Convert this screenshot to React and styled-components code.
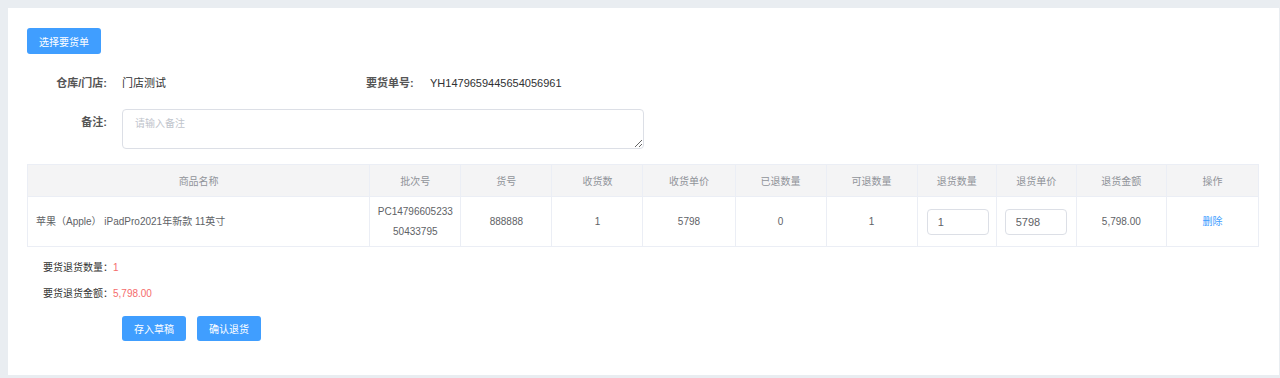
import React from 'react'
import styled, { createGlobalStyle } from 'styled-components'

const GlobalStyle = createGlobalStyle`
  html, body {
    margin: 0;
    padding: 0;
    background: #e9edf1;
  }
  body {
    padding: 8px 1px 3px 8px;
    font-family: "Liberation Sans", "Noto Sans CJK SC", sans-serif;
    color: #606266;
  }
`;

const Panel = styled.div`
  background: #fff;
  padding: 20px 19px 0 19px;
  height: 367px;
  box-sizing: border-box;
`;

const Button = styled.button`
  -webkit-appearance: none;
  display: block;
  border: 0;
  border-radius: 3px;
  background: #409eff;
  color: #fff;
  font-family: inherit;
  font-size: 10px;
  height: ${p => p.$h || 25}px;
  padding: 0 12px;
  cursor: pointer;
`;

const FormRow = styled.div`
  display: grid;
  grid-template-columns: ${p => p.$cols};
  align-items: ${p => (p.$top ? 'start' : 'center')};
  margin-top: ${p => p.$mt || 0}px;
`;

const Label = styled.div`
  text-align: ${p => (p.$left ? 'left' : 'right')};
  padding-right: ${p => (p.$left ? 0 : 15)}px;
  font-size: 11px;
  color: #555;
  font-weight: bold;
  height: 20px;
  line-height: 20px;
  white-space: nowrap;
  margin-top: ${p => (p.$top ? 3 : 0)}px;
`;

const Value = styled.div`
  font-size: 11px;
  color: #303133;
  height: 20px;
  line-height: 20px;
  white-space: nowrap;
`;

const Remark = styled.textarea`
  display: block;
  width: 522px;
  height: 40px;
  box-sizing: border-box;
  border: 1px solid #dcdfe6;
  border-radius: 4px;
  padding: 5px 12px;
  font-family: inherit;
  font-size: 10px;
  color: #606266;
  resize: vertical;
  &::placeholder {
    color: #c0c4cc;
  }
`;

const Table = styled.table`
  margin-top: 15px;
  border-collapse: collapse;
  width: 1232px;
  table-layout: fixed;
  font-size: 10px;
`;

const Th = styled.th`
  background: #f4f4f5;
  color: #909399;
  font-weight: normal;
  height: 31px;
  border: 1px solid #ebeef5;
  text-align: center;
  padding: 0;
`;

const Td = styled.td`
  height: 49px;
  border: 1px solid #ebeef5;
  text-align: ${p => (p.$left ? 'left' : 'center')};
  padding: 0 ${p => (p.$left ? 8 : 0)}px;
  color: #606266;
  line-height: 20px;
`;

const CellInput = styled.input`
  width: 62px;
  height: 26px;
  box-sizing: border-box;
  border: 1px solid #dcdfe6;
  border-radius: 4px;
  padding: 0 10px;
  font-family: inherit;
  font-size: 11px;
  color: #606266;
  margin-left: ${p => p.$ml || 0}px;
  display: block;
`;

const Link = styled.a`
  color: #409eff;
  cursor: pointer;
`;

const Summary = styled.div`
  font-size: 10px;
  color: #333;
  padding-left: 16px;
  margin-top: ${p => p.$mt}px;
  height: 16px;
  line-height: 16px;
`;

const Red = styled.span`
  color: #f56c6c;
`;

const Actions = styled.div`
  display: flex;
  gap: 11px;
  margin-top: 14px;
  padding-left: 95px;
`;

const columns = [
  ['商品名称', 342],
  ['批次号', 91],
  ['货号', 91],
  ['收货数', 91],
  ['收货单价', 92],
  ['已退数量', 91],
  ['可退数量', 91],
  ['退货数量', 79],
  ['退货单价', 80],
  ['退货金额', 90],
  ['操作', 92],
];

export default function App() {
  return (
    <>
      <GlobalStyle />
      <Panel>
        <Button $h={26}>选择要货单</Button>
        <FormRow $cols="95px 244px 64px auto" $mt={19}>
          <Label>仓库/门店:</Label>
          <Value>门店测试</Value>
          <Label $left>要货单号:</Label>
          <Value>YH1479659445654056961</Value>
        </FormRow>
        <FormRow $cols="95px auto" $top $mt={16}>
          <Label $top>备注:</Label>
          <Remark placeholder="请输入备注" />
        </FormRow>
        <Table>
          <colgroup>
            {columns.map(([name, w]) => (
              <col key={name} style={{ width: w }} />
            ))}
          </colgroup>
          <thead>
            <tr>
              {columns.map(([name]) => (
                <Th key={name}>{name}</Th>
              ))}
            </tr>
          </thead>
          <tbody>
            <tr>
              <Td $left>苹果（Apple） iPadPro2021年新款 11英寸</Td>
              <Td>PC14796605233<br />50433795</Td>
              <Td>888888</Td>
              <Td>1</Td>
              <Td>5798</Td>
              <Td>0</Td>
              <Td>1</Td>
              <Td><CellInput $ml={9} defaultValue="1" /></Td>
              <Td><CellInput $ml={8} defaultValue="5798" /></Td>
              <Td>5,798.00</Td>
              <Td><Link>删除</Link></Td>
            </tr>
          </tbody>
        </Table>
        <Summary $mt={13}>要货退货数量：<Red>1</Red></Summary>
        <Summary $mt={10}>要货退货金额：<Red>5,798.00</Red></Summary>
        <Actions>
          <Button>存入草稿</Button>
          <Button>确认退货</Button>
        </Actions>
      </Panel>
    </>
  );
}
